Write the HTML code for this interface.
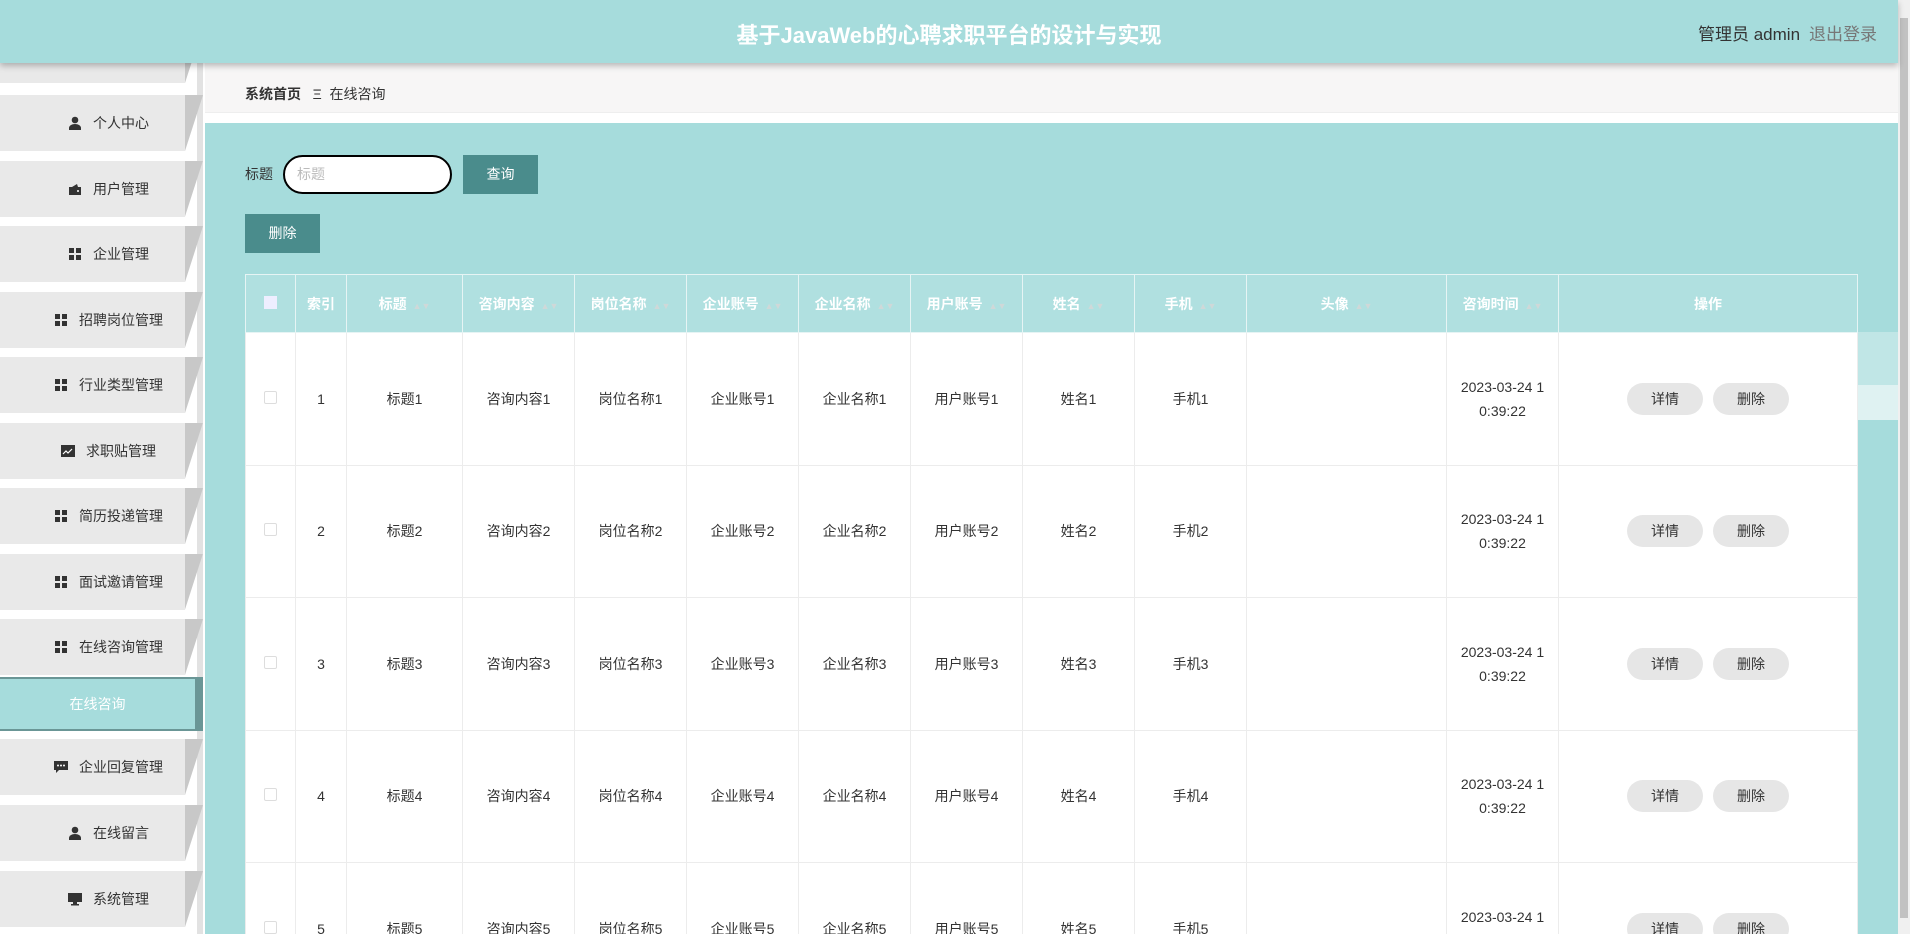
<!DOCTYPE html>
<html style="width:1910px;height:934px;overflow:hidden"><head><meta charset="utf-8"><style>
*{margin:0;padding:0;box-sizing:border-box}
body{width:1910px;height:934px;overflow:hidden;background:#fff;font-family:"Liberation Sans","Noto Sans CJK SC",sans-serif;position:relative;color:#333}
#w{position:absolute;left:0;top:0;width:1910px;height:934px;overflow:hidden}
.hdr{position:absolute;left:0;top:0;width:1898px;height:63px;background:#a6dcdc;box-shadow:0 3px 6px rgba(0,0,0,.25);z-index:5}
.hdr .t{position:absolute;left:0;width:1898px;top:18px;text-align:center;color:#fff;font-weight:bold;font-size:22px}
.hdr .u{position:absolute;left:1698px;top:20px;font-size:17px;color:#333}
.hdr .o{position:absolute;left:1809px;top:20px;font-size:17px;color:#777}
.sb{position:absolute;left:1898px;top:0;width:12px;height:934px;background:#f0f0f0}
.sb i{position:absolute;left:2px;top:18px;width:8px;height:900px;background:#c2c2c2}
.side{position:absolute;left:0;top:63px;width:205px;height:871px;background:#fff}
.strip{position:absolute;left:197px;top:63px;width:6px;height:871px;background:#e2e2e2}
.it{position:absolute;left:0;width:185px;height:56px;background:#e9e9e9;font-size:14px;color:#333;display:flex;align-items:center;justify-content:center;padding-left:32px}
.it svg{margin-right:11px}
.sl{position:absolute;left:185px;width:18px;height:56px;background:#c8c8c8;clip-path:polygon(0 0,100% 0,0 100%)}
.act{position:absolute;left:0;top:677px;width:203px;height:54px;background:#a6dcdc;border:2px solid #6a9696;border-right:8px solid #6a9696;border-left:none;color:#fff;font-size:14px;text-align:center;line-height:50px}
.bc{position:absolute;left:205px;top:63px;width:1693px;height:50px;background:#f7f6f6;border-bottom:1px solid #eee;font-size:14px;line-height:62px;padding-left:40px}
.main{position:absolute;left:205px;top:123px;width:1693px;height:811px;background:#a6dcdc}
.lbl{position:absolute;left:245px;top:164px;font-size:14px}
.inp{position:absolute;left:283px;top:155px;width:169px;height:39px;border:2px solid #000;border-radius:20px;background:#fff;color:#bbb;font-size:14px;line-height:35px;padding-left:12px}
.btn{position:absolute;background:#4a8c8c;color:#fff;font-size:14px;text-align:center;line-height:39px;height:39px}
table{position:absolute;left:245px;top:274px;border-collapse:collapse;background:#fff;table-layout:fixed}
th{height:58px;background:#b0e0e0;color:#fff;font-size:14px;font-weight:bold;border:1px solid #e6f4f4}
td{height:132.5px;border:1px solid #ececec;text-align:center;font-size:14px;color:#333}
.ar{color:#cfd8d8;font-size:9px;margin-left:6px}
.cb{display:inline-block;width:13px;height:13px;border:1px solid #ddd;background:#fff;border-radius:2px}
.hcb{display:inline-block;width:13px;height:13px;background:#eef}
.b{display:inline-block;width:76px;height:32px;line-height:32px;border-radius:16px;background:#e6e6e6;margin:0 5px}
.tm{line-height:24px}
</style></head><body><div id="w">
<div class="hdr"><div class="t">基于JavaWeb的心聘求职平台的设计与实现</div><div class="u">管理员 admin</div><div class="o">退出登录</div></div>
<div class="side"></div>
<div class="strip"></div>
<div class="it" style="top:27px"></div><div class="sl" style="top:27px"></div>

<div class="it" style="top:95px"><svg width="14" height="14" viewBox="0 0 14 14"><circle cx="7" cy="4" r="3.3" fill="#333"/><path d="M1 14v-2c0-2.5 3-4 6-4s6 1.5 6 4v2z" fill="#333"/></svg>个人中心</div><div class="sl" style="top:95px"></div>
<div class="it" style="top:160.5px"><svg width="14" height="14" viewBox="0 0 14 14"><path d="M1 5h12v8H1z M4 5l5-3 1 3" fill="#333"/><circle cx="10" cy="9" r="1" fill="#fff"/></svg>用户管理</div><div class="sl" style="top:160.5px"></div>
<div class="it" style="top:226px"><svg width="14" height="14" viewBox="0 0 14 14" fill="#333"><rect x="1" y="1" width="5" height="5"/><rect x="8" y="1" width="5" height="5"/><rect x="1" y="8" width="5" height="5"/><rect x="8" y="8" width="5" height="5"/></svg>企业管理</div><div class="sl" style="top:226px"></div>
<div class="it" style="top:291.5px"><svg width="14" height="14" viewBox="0 0 14 14" fill="#333"><rect x="1" y="1" width="5" height="5"/><rect x="8" y="1" width="5" height="5"/><rect x="1" y="8" width="5" height="5"/><rect x="8" y="8" width="5" height="5"/></svg>招聘岗位管理</div><div class="sl" style="top:291.5px"></div>
<div class="it" style="top:357px"><svg width="14" height="14" viewBox="0 0 14 14" fill="#333"><rect x="1" y="1" width="5" height="5"/><rect x="8" y="1" width="5" height="5"/><rect x="1" y="8" width="5" height="5"/><rect x="8" y="8" width="5" height="5"/></svg>行业类型管理</div><div class="sl" style="top:357px"></div>
<div class="it" style="top:422.5px"><svg width="14" height="14" viewBox="0 0 14 14"><rect x="0" y="1" width="14" height="12" fill="#333"/><path d="M2 10l3-3 2 2 4-4" stroke="#fff" stroke-width="1.2" fill="none"/></svg>求职贴管理</div><div class="sl" style="top:422.5px"></div>
<div class="it" style="top:488px"><svg width="14" height="14" viewBox="0 0 14 14" fill="#333"><rect x="1" y="1" width="5" height="5"/><rect x="8" y="1" width="5" height="5"/><rect x="1" y="8" width="5" height="5"/><rect x="8" y="8" width="5" height="5"/></svg>简历投递管理</div><div class="sl" style="top:488px"></div>
<div class="it" style="top:553.5px"><svg width="14" height="14" viewBox="0 0 14 14" fill="#333"><rect x="1" y="1" width="5" height="5"/><rect x="8" y="1" width="5" height="5"/><rect x="1" y="8" width="5" height="5"/><rect x="8" y="8" width="5" height="5"/></svg>面试邀请管理</div><div class="sl" style="top:553.5px"></div>
<div class="it" style="top:619px"><svg width="14" height="14" viewBox="0 0 14 14" fill="#333"><rect x="1" y="1" width="5" height="5"/><rect x="8" y="1" width="5" height="5"/><rect x="1" y="8" width="5" height="5"/><rect x="8" y="8" width="5" height="5"/></svg>在线咨询管理</div><div class="sl" style="top:619px"></div>
<div class="act">在线咨询</div>
<div class="it" style="top:739px"><svg width="14" height="14" viewBox="0 0 14 14"><path d="M0 1h14v9H5l-3 3v-3H0z" fill="#333"/><circle cx="4" cy="5.5" r="1" fill="#fff"/><circle cx="7" cy="5.5" r="1" fill="#fff"/><circle cx="10" cy="5.5" r="1" fill="#fff"/></svg>企业回复管理</div><div class="sl" style="top:739px"></div>
<div class="it" style="top:805px"><svg width="14" height="14" viewBox="0 0 14 14"><circle cx="7" cy="4" r="3.3" fill="#333"/><path d="M1 14v-2c0-2.5 3-4 6-4s6 1.5 6 4v2z" fill="#333"/></svg>在线留言</div><div class="sl" style="top:805px"></div>
<div class="it" style="top:871px"><svg width="14" height="14" viewBox="0 0 14 14" fill="#333"><rect x="0" y="1" width="14" height="9"/><rect x="5" y="10" width="4" height="2"/><rect x="3" y="12" width="8" height="1.5"/></svg>系统管理</div><div class="sl" style="top:871px"></div>

<div class="bc"><b>系统首页</b>&nbsp;&nbsp;&nbsp;Ξ&nbsp;&nbsp;在线咨询</div>
<div class="main"></div>
<div style="position:absolute;left:1857px;top:332px;width:41px;height:53px;background:#c0e6e6"></div>
<div style="position:absolute;left:1857px;top:385px;width:41px;height:35px;background:#dff2f2"></div>
<div class="lbl">标题</div>
<div class="inp">标题</div>
<div class="btn" style="left:463px;top:155px;width:75px">查询</div>
<div class="btn" style="left:245px;top:214px;width:75px">删除</div>
<table>
<colgroup><col style="width:50px"><col style="width:51px"><col style="width:116px"><col style="width:112px"><col style="width:112px"><col style="width:112px"><col style="width:112px"><col style="width:112px"><col style="width:112px"><col style="width:112px"><col style="width:200px"><col style="width:112px"><col style="width:299px"></colgroup>
<tr><th><span class="hcb"></span></th><th>索引</th><th>标题<span class="ar">▲▼</span></th><th>咨询内容<span class="ar">▲▼</span></th><th>岗位名称<span class="ar">▲▼</span></th><th>企业账号<span class="ar">▲▼</span></th><th>企业名称<span class="ar">▲▼</span></th><th>用户账号<span class="ar">▲▼</span></th><th>姓名<span class="ar">▲▼</span></th><th>手机<span class="ar">▲▼</span></th><th>头像<span class="ar">▲▼</span></th><th>咨询时间<span class="ar">▲▼</span></th><th>操作</th></tr>
<tr><td><span class="cb"></span></td><td>1</td><td>标题1</td><td>咨询内容1</td><td>岗位名称1</td><td>企业账号1</td><td>企业名称1</td><td>用户账号1</td><td>姓名1</td><td>手机1</td><td></td><td class="tm">2023-03-24 1<br>0:39:22</td><td><span class="b">详情</span><span class="b">删除</span></td></tr>
<tr><td><span class="cb"></span></td><td>2</td><td>标题2</td><td>咨询内容2</td><td>岗位名称2</td><td>企业账号2</td><td>企业名称2</td><td>用户账号2</td><td>姓名2</td><td>手机2</td><td></td><td class="tm">2023-03-24 1<br>0:39:22</td><td><span class="b">详情</span><span class="b">删除</span></td></tr>
<tr><td><span class="cb"></span></td><td>3</td><td>标题3</td><td>咨询内容3</td><td>岗位名称3</td><td>企业账号3</td><td>企业名称3</td><td>用户账号3</td><td>姓名3</td><td>手机3</td><td></td><td class="tm">2023-03-24 1<br>0:39:22</td><td><span class="b">详情</span><span class="b">删除</span></td></tr>
<tr><td><span class="cb"></span></td><td>4</td><td>标题4</td><td>咨询内容4</td><td>岗位名称4</td><td>企业账号4</td><td>企业名称4</td><td>用户账号4</td><td>姓名4</td><td>手机4</td><td></td><td class="tm">2023-03-24 1<br>0:39:22</td><td><span class="b">详情</span><span class="b">删除</span></td></tr>
<tr><td><span class="cb"></span></td><td>5</td><td>标题5</td><td>咨询内容5</td><td>岗位名称5</td><td>企业账号5</td><td>企业名称5</td><td>用户账号5</td><td>姓名5</td><td>手机5</td><td></td><td class="tm">2023-03-24 1<br>0:39:22</td><td><span class="b">详情</span><span class="b">删除</span></td></tr>
</table>
<div class="sb"><i></i></div>
</div></body></html>
